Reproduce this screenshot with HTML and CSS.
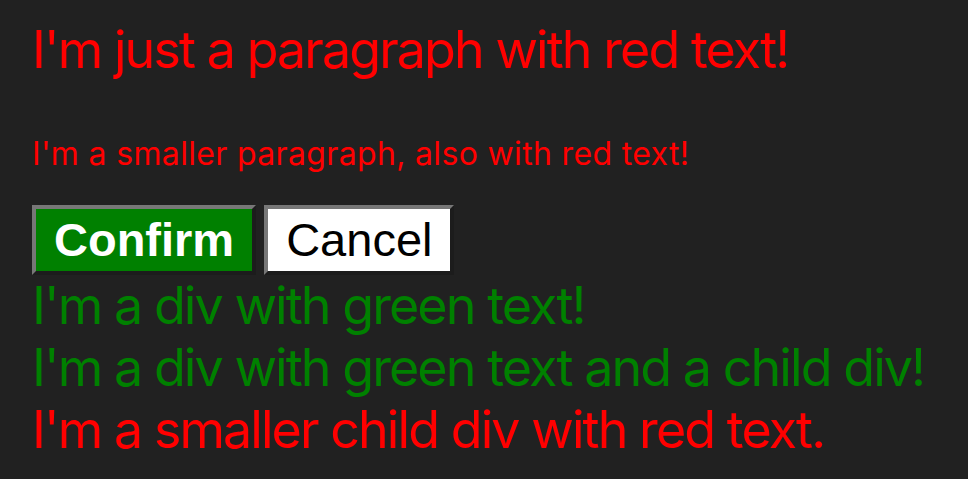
FILE: index.html
```html
<!DOCTYPE html>
<html>
<head>
<meta charset="utf-8">
<link rel="stylesheet" href="styles.css">
</head>
<body>
<p class="para">I'm just a paragraph with red text!</p>
<p class="para small">I'm a smaller paragraph, also with red text!</p>
<div class="buttons">
  <button class="btn confirm">Confirm</button>
  <button class="btn cancel">Cancel</button>
</div>
<div class="green">I'm a div with green text!</div>
<div class="green">I'm a div with green text and a child div!
  <div class="child">I'm a smaller child div with red text.</div>
</div>
</body>
</html>
```
FILE: styles.css
```css
html, body {
  background: #212121;
}
body {
  margin: 0;
  padding: 19px 0 0 32px;
  font-family: Inter, "Noto Sans", sans-serif;
}
.para {
  color: #ff0000;
  font-size: 52px;
  line-height: 62px;
  letter-spacing: -1.94px;
  margin: 0;
}
.para.small {
  font-size: 32px;
  line-height: 40px;
  letter-spacing: 0.34px;
  margin-top: 53px;
}
.buttons {
  display: flex;
  gap: 8px;
  margin-top: 31px;
}
.btn {
  font-family: "Liberation Sans", Arial, sans-serif;
  font-size: 47px;
  line-height: 54px;
  padding: 4px 18px;
  margin: 0;
  border-width: 4px;
  border-style: solid;
  border-color: #777 #1c1c1c #1c1c1c #777;
}
.confirm {
  background: #008000;
  color: #fff;
  font-weight: bold;
}
.cancel {
  background: #fff;
  color: #000;
}
.green {
  color: #008000;
  font-size: 52px;
  line-height: 62px;
  letter-spacing: -1.94px;
}
.child {
  color: #ff0000;
}
```
